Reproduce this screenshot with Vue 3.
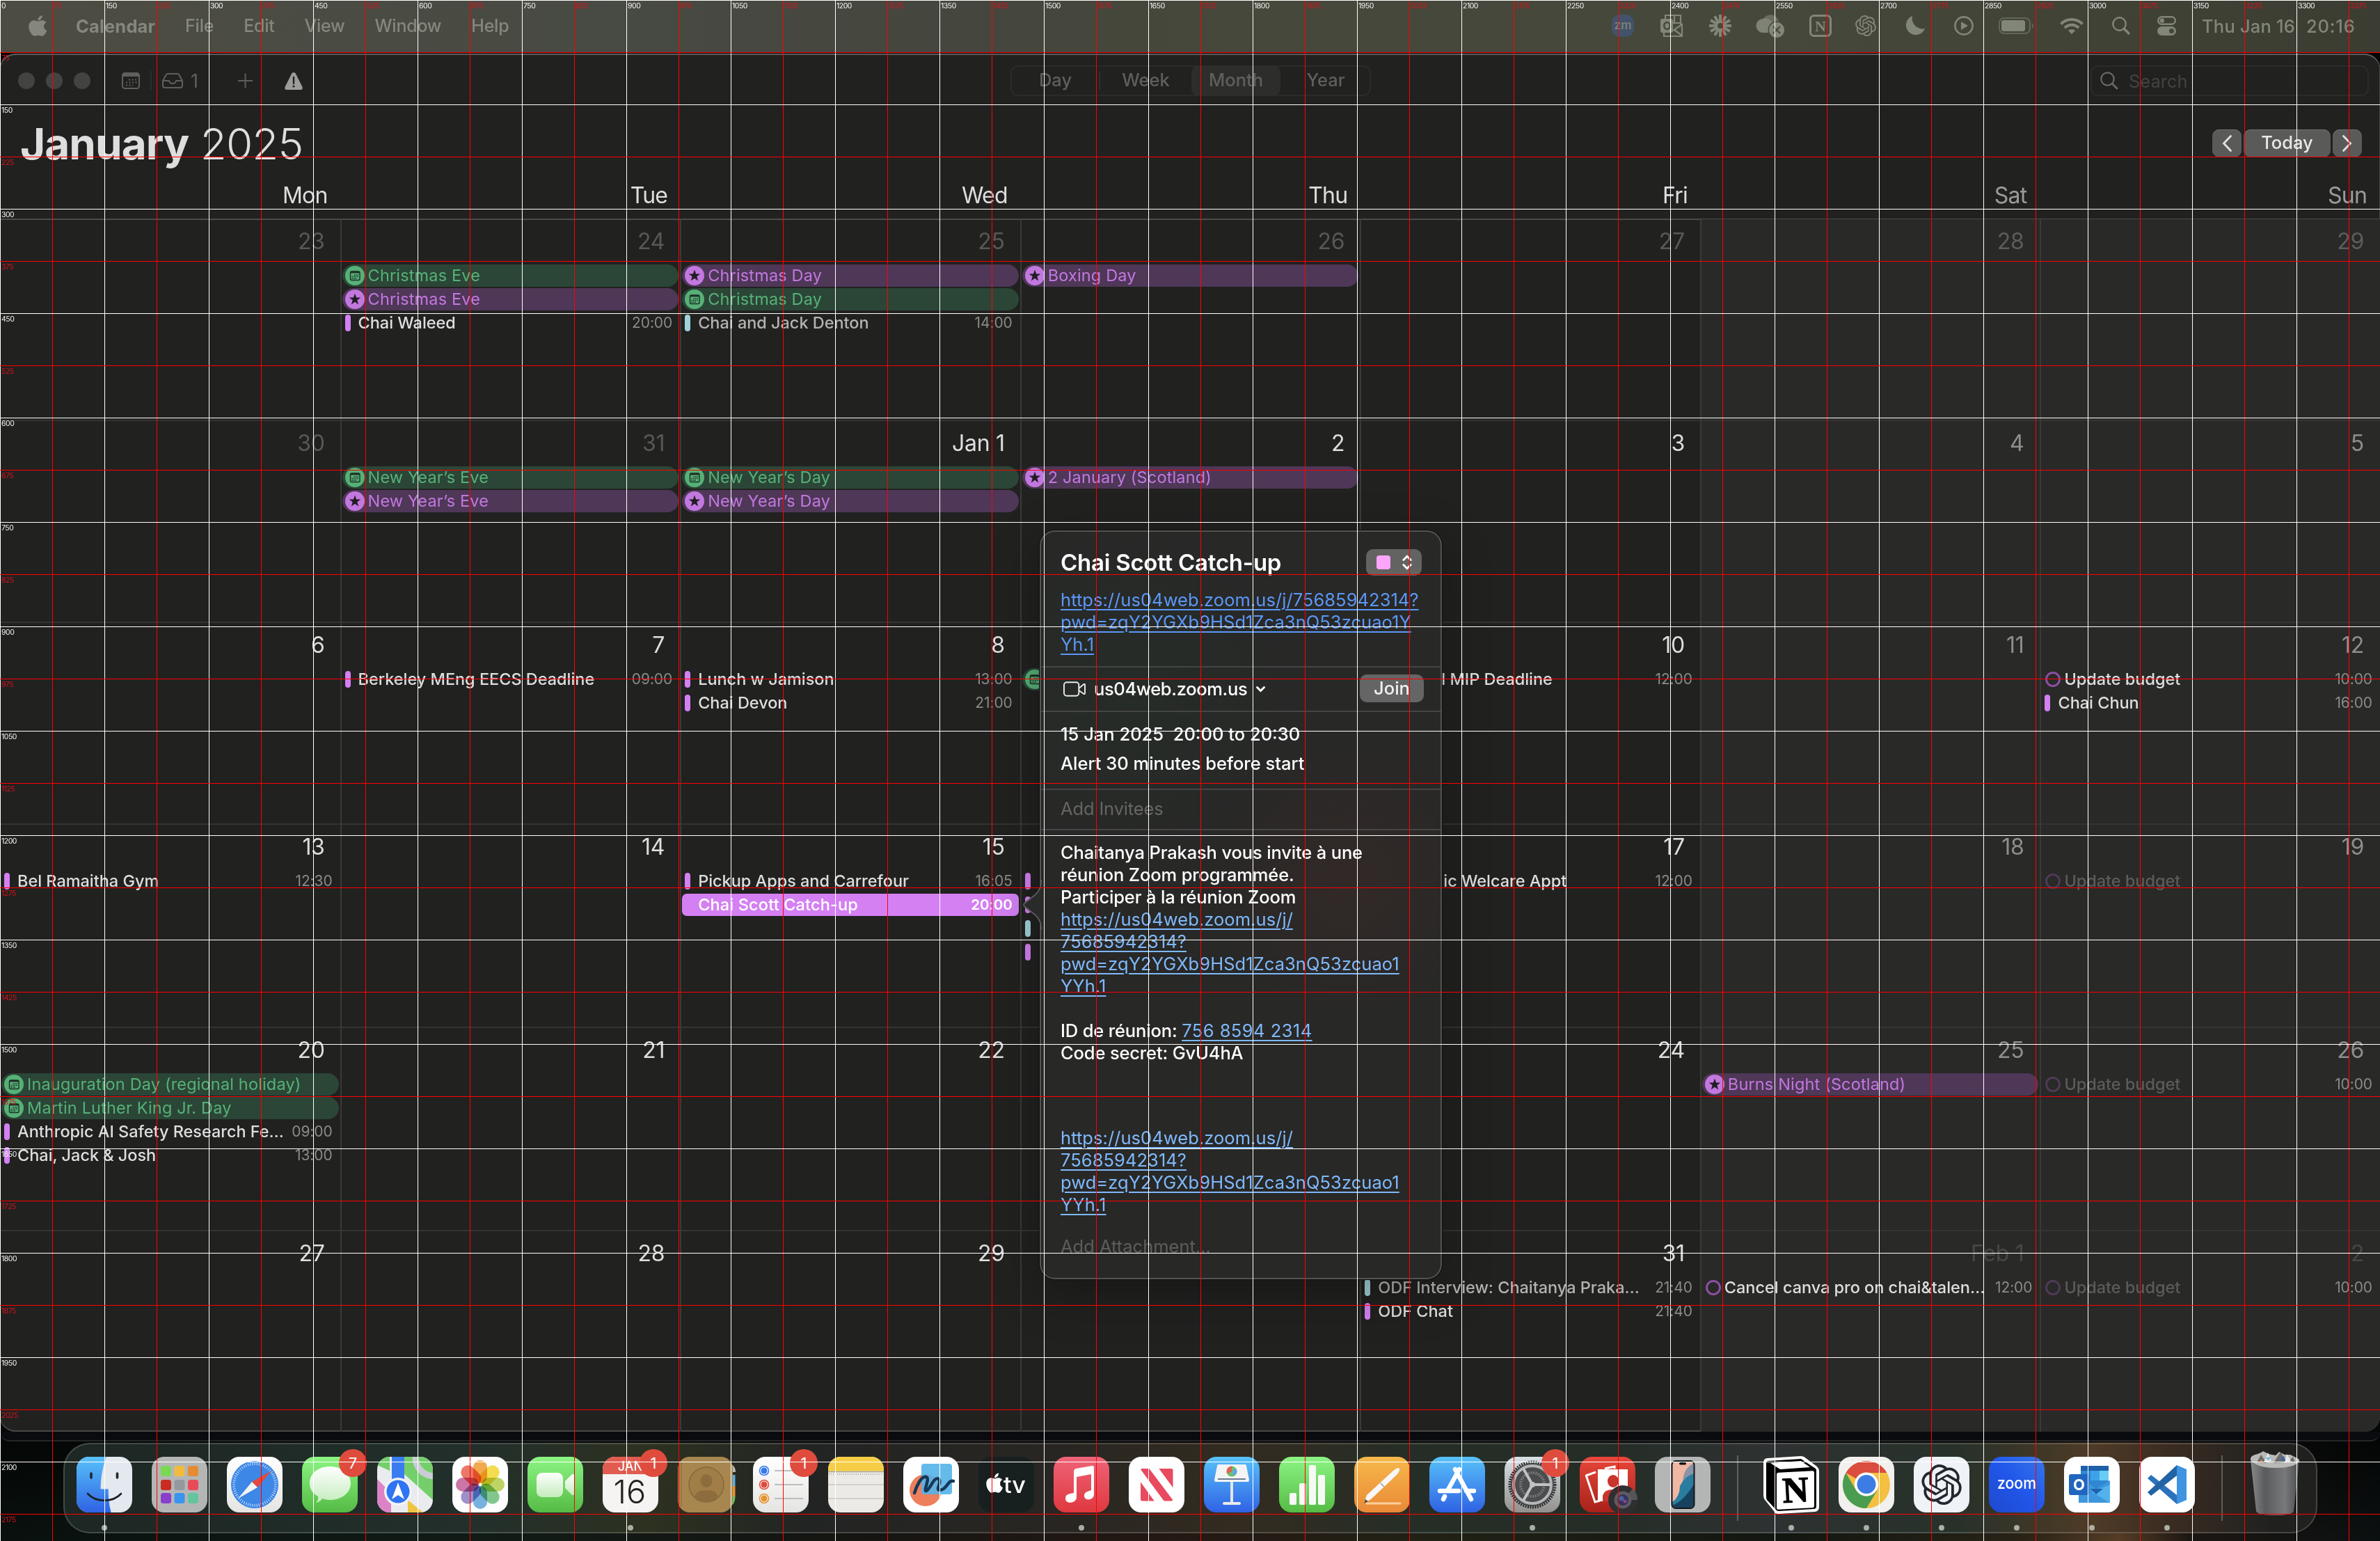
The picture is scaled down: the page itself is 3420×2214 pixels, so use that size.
<script setup>
const weekdays = ['Mon', 'Tue', 'Wed', 'Thu', 'Fri', 'Sat', 'Sun']

const holiday = (title) => ({ kind: 'pill', tone: 'green', title })
const special = (title) => ({ kind: 'pill', tone: 'purple', title })
const event = (title, time, extra = {}) => ({ kind: 'event', color: '#d480f3', title, time, ...extra })
const reminder = (title, time, extra = {}) => ({ kind: 'reminder', title, time, ...extra })

const weeks = [
  { height: 290, days: [
    { label: '23', out: true },
    { label: '24', out: true, items: [holiday('Christmas Eve'), special('Christmas Eve'), event('Chai Waleed', '20:00')] },
    { label: '25', out: true, items: [special('Christmas Day'), holiday('Christmas Day'), event('Chai and Jack Denton', '14:00', { color: '#a0d3d9', soft: true })] },
    { label: '26', out: true, items: [special('Boxing Day')] },
    { label: '27', out: true }, { label: '28', out: true }, { label: '29', out: true },
  ] },
  { height: 290, days: [
    { label: '30', out: true },
    { label: '31', out: true, items: [holiday('New Year’s Eve'), special('New Year’s Eve')] },
    { label: 'Jan 1', items: [holiday('New Year’s Day'), special('New Year’s Day')] },
    { label: '2', items: [special('2 January (Scotland)')] },
    { label: '3' }, { label: '4' }, { label: '5' },
  ] },
  { height: 290, days: [
    { label: '6' },
    { label: '7', items: [event('Berkeley MEng EECS Deadline', '09:00')] },
    { label: '8', items: [event('Lunch w Jamison', '13:00'), event('Chai Devon', '21:00')] },
    { label: '', items: [holiday('')] },
    { label: '10', items: [event('l MIP Deadline', '12:00', { indent: 91 })] },
    { label: '11' },
    { label: '12', items: [reminder('Update budget', '10:00'), event('Chai Chun', '16:00')] },
  ] },
  { height: 292, days: [
    { label: '13', items: [event('Bel Ramaitha Gym', '12:30')] },
    { label: '14' },
    { label: '15', items: [event('Pickup Apps and Carrefour', '16:05'), event('Chai Scott Catch-up', '20:00', { selected: true })] },
    { label: '', items: [event('', ''), event('', ''), event('', '', { color: '#a0d3d9' }), event('', '')] },
    { label: '17', items: [event('ic Welcare Appt', '12:00', { indent: 94 })] },
    { label: '18' },
    { label: '19', items: [reminder('Update budget', '', { faded: true })] },
  ] },
  { height: 292, days: [
    { label: '20', items: [holiday('Inauguration Day (regional holiday)'), holiday('Martin Luther King Jr. Day'), event('Anthropic AI Safety Research Fe…', '09:00'), event('Chai, Jack & Josh', '13:00')] },
    { label: '21' }, { label: '22' }, { label: '' }, { label: '24' },
    { label: '25', items: [special('Burns Night (Scotland)')] },
    { label: '26', items: [reminder('Update budget', '10:00', { faded: true })] },
  ] },
  { height: 289, days: [
    { label: '27' }, { label: '28' }, { label: '29' }, { label: '' },
    { label: '31', items: [event('ODF Interview: Chaitanya Praka…', '21:40', { color: '#a0d3d9', soft: true }), event('ODF Chat', '21:40')] },
    { label: 'Feb 1', out: true, items: [reminder('Cancel canva pro on chai&talen…', '12:00')] },
    { label: '2', out: true, items: [reminder('Update budget', '10:00', { faded: true })] },
  ] },
]

const columnMarks = Array.from({ length: 46 }, (_, i) => i * 75)
const rowMarks = Array.from({ length: 29 }, (_, i) => (i + 1) * 75)

const ticks = Array.from({ length: 60 }, (_, i) => i * 6)
const rays = Array.from({ length: 12 }, (_, i) => i * 30)
const petals = ['#f39a2e', '#f5d932', '#b5cf4b', '#6cc07a', '#5fa6dd', '#8f7cc4', '#c65f97', '#e9604f']
const openai = 'M22.2819 9.8211a5.9847 5.9847 0 0 0-.5157-4.9108 6.0462 6.0462 0 0 0-6.5098-2.9A6.0651 6.0651 0 0 0 4.9807 4.1818a5.9847 5.9847 0 0 0-3.9977 2.9 6.0462 6.0462 0 0 0 .7427 7.0966 5.98 5.98 0 0 0 .511 4.9107 6.051 6.051 0 0 0 6.5146 2.9001A5.9847 5.9847 0 0 0 13.2599 24a6.0557 6.0557 0 0 0 5.7718-4.2058 5.9894 5.9894 0 0 0 3.9977-2.9001 6.0557 6.0557 0 0 0-.7475-7.0729zm-9.022 12.6081a4.4755 4.4755 0 0 1-2.8764-1.0408l.1419-.0804 4.7783-2.7582a.7948.7948 0 0 0 .3927-.6813v-6.7369l2.02 1.1686a.071.071 0 0 1 .038.052v5.5826a4.504 4.504 0 0 1-4.4945 4.4944zm-9.6607-4.1254a4.4708 4.4708 0 0 1-.5346-3.0137l.142.0852 4.783 2.7582a.7712.7712 0 0 0 .7806 0l5.8428-3.3685v2.3324a.0804.0804 0 0 1-.0332.0615L9.74 19.9502a4.4992 4.4992 0 0 1-6.1408-1.6464zM2.3408 7.8956a4.485 4.485 0 0 1 2.3655-1.9728V11.6a.7664.7664 0 0 0 .3879.6765l5.8144 3.3543-2.0201 1.1685a.0757.0757 0 0 1-.071 0l-4.8303-2.7865A4.504 4.504 0 0 1 2.3408 7.872zm16.5963 3.8558L13.1038 8.364 15.1192 7.2a.0757.0757 0 0 1 .071 0l4.8303 2.7913a4.4944 4.4944 0 0 1-.6765 8.1042v-5.6772a.79.79 0 0 0-.407-.667zm2.0107-3.0231l-.142-.0852-4.7735-2.7818a.7759.7759 0 0 0-.7854 0L9.409 9.2297V6.8974a.0662.0662 0 0 1 .0284-.0615l4.8303-2.7866a4.4992 4.4992 0 0 1 6.6802 4.66zM8.3065 12.863l-2.02-1.1638a.0804.0804 0 0 1-.038-.0567V6.0742a4.4992 4.4992 0 0 1 7.3757-3.4537l-.142.0805L8.704 5.459a.7948.7948 0 0 0-.3927.6813zm1.0976-2.3654l2.602-1.4998 2.6069 1.4998v2.9994l-2.5974 1.4997-2.6067-1.4997Z'
const apple = 'M318.7 268.7c-.2-36.7 16.4-64.4 50-84.8-18.8-26.9-47.2-41.7-84.7-44.6-35.5-2.8-74.3 20.7-88.5 20.7-15 0-49.4-19.7-76.4-19.7C63.3 141.2 4 184.8 4 273.5q0 39.3 14.4 81.2c12.8 36.7 59 126.7 107.2 125.2 25.2-.6 43-17.9 75.8-17.9 31.8 0 48.3 17.9 76.4 17.9 48.6-.7 90.4-82.5 102.6-119.3-65.2-30.7-61.7-90-61.7-91.9zm-56.6-164.2c27.3-32.4 24.8-61.9 24-72.5-24.1 1.4-52 16.4-67.9 34.9-17.5 19.8-27.8 44.3-25.6 71.9 26.1 2 49.9-11.4 69.5-34.3z'
</script>

<template>
  <div class="desktop">
    <header class="menubar">
      <svg class="apple" viewBox="0 30 376 452" preserveAspectRatio="none"><path :d="apple" fill="currentColor" /></svg>
      <nav class="menus">
        <b>Calendar</b><span>File</span><span>Edit</span><span>View</span><span>Window</span><span>Help</span>
      </nav>
      <div class="status">
        <svg class="s-zm" viewBox="0 0 32 32"><rect width="32" height="32" rx="12" fill="#42536b" /><text x="16" y="21" text-anchor="middle" font-size="17" font-weight="600" fill="#7d8276">zm</text></svg>
        <svg class="s-outlook" viewBox="0 0 32 32" fill="none" stroke="currentColor" stroke-width="2.2"><path d="M7 6V1h22v15M18 12h11M20 1v12M5 25v6h26V14L18 23m2-1 11 8" /><rect x="0" y="6" width="18" height="20" rx="3" fill="currentColor" stroke="none" /><ellipse cx="9.5" cy="16" rx="4.2" ry="5" stroke="#45483a" stroke-width="2.6" /></svg>
        <svg class="s-burst" viewBox="-16 -16 32 32"><rect v-for="r in rays" :key="r" x="-2" y="-16" width="4" height="12" fill="currentColor" :transform="`rotate(${r})`" /></svg>
        <svg class="s-cloud" viewBox="0 0 40 36"><path d="M9 10a12 12 0 0 1 23 2l-12 5z" fill="#6a6d5f" /><path d="M10 28A10 10 0 0 1 9 8c6-2 12 2 15 6l-6 14z" fill="#7f8375" /><circle cx="29" cy="24" r="12.5" fill="#45483a" /><circle cx="29" cy="24" r="11" fill="currentColor" /><path d="m24 19 10 10m0-10L24 29" stroke="#45483a" stroke-width="2" /></svg>
        <svg class="s-notion" viewBox="0 0 32 32"><rect x="1.5" y="1.5" width="29" height="29" rx="5" fill="none" stroke="currentColor" stroke-width="3" /><text x="16" y="24" text-anchor="middle" font-size="22" font-weight="700" font-family="Liberation Serif, serif" fill="currentColor">N</text></svg>
        <svg class="s-gpt" viewBox="0 0 24 24"><path :d="openai" fill="currentColor" /></svg>
        <svg class="s-moon" viewBox="0 0 28 28"><path d="M10 0A14 14 0 1 0 28 18 15 15 0 0 1 10 0z" fill="currentColor" /></svg>
        <svg class="s-play" viewBox="0 0 28 28"><circle cx="14" cy="14" r="12.6" fill="none" stroke="currentColor" stroke-width="2.6" /><path d="M10 8v12l10-6z" fill="currentColor" /></svg>
        <svg class="s-battery" viewBox="0 0 52 24"><rect x="1" y="1" width="44" height="22" rx="7" fill="none" stroke="#62655a" stroke-width="2" /><rect x="4" y="4" width="34" height="16" rx="3.5" fill="currentColor" /><path d="M48 8v8q4-4 0-8" fill="#62655a" /></svg>
        <svg class="s-wifi" viewBox="0 0 34 24" fill="none" stroke="currentColor" stroke-width="4"><path d="M1.5 9.5a22 22 0 0 1 31 0M7 15a14 14 0 0 1 20 0" /><path d="M12 19q5-4 10 0l-5 5z" fill="currentColor" stroke="none" /></svg>
        <svg class="s-search" viewBox="0 0 26 26" fill="none" stroke="currentColor" stroke-width="2.4"><circle cx="10.5" cy="10.5" r="9.2" /><path d="m17 17 7 7" stroke-width="3.4" stroke-linecap="round" /></svg>
        <svg class="s-cc" viewBox="0 0 27 28"><rect x="1.2" y="1.2" width="24.6" height="10.6" rx="5.3" fill="none" stroke="currentColor" stroke-width="2.4" /><circle cx="6.8" cy="6.5" r="3.2" fill="currentColor" /><rect y="15" width="27" height="13" rx="6.5" fill="currentColor" /><circle cx="20.5" cy="21.5" r="3.6" fill="#45483a" /></svg>
        <span class="clock-day">Thu Jan 16</span><span class="clock-time">20:16</span>
      </div>
    </header>

    <main class="window">
      <div class="toolbar">
        <div class="lights"><i></i><i></i><i></i></div>
        <svg class="t-cal" viewBox="0 0 26 24" fill="none" stroke="currentColor" stroke-width="2"><rect x="1" y="1" width="24" height="22" rx="3.5" /><path d="M1 4h24" stroke-width="4" /><path d="M10 10.500h12M6 14.500h16M6 18.500h10" stroke-width="2" stroke-dasharray="2 2.500" /></svg>
        <i class="t-rule"></i>
        <svg class="t-tray" viewBox="0 0 30 22" fill="none" stroke="currentColor" stroke-width="2" stroke-linejoin="round"><path d="M1 11 6 2q.5-1 2-1h14q1.500 0 2 1l5 9v7q0 3-3 3H4q-3 0-3-3zh9q1 4 5 4t5-4h9" /></svg>
        <span class="t-count">1</span>
        <svg class="t-plus" viewBox="0 0 22 22" stroke="currentColor" stroke-width="2"><path d="M11 0v22M0 11h22" /></svg>
        <svg class="t-warn" viewBox="0 0 26 25"><path d="M13 0q2 0 3 2l9.500 19q1 4-2.500 4H3q-3.500 0-2.500-4L10 2q1-2 3-2z" fill="#9c9c9b" /><path d="M13 7v9" stroke="#212120" stroke-width="2.400" stroke-linecap="round" /><circle cx="13" cy="20" r="1.600" fill="#212120" /></svg>
        <div class="segments"><span class="ruled">Day</span><span>Week</span><span class="on">Month</span><span>Year</span></div>
        <div class="search">
          <svg viewBox="0 0 26 26" fill="none" stroke="currentColor" stroke-width="2.2"><circle cx="10.500" cy="10.500" r="9.200" /><path d="m17 17 7 7" stroke-width="2.800" stroke-linecap="round" /></svg>
          <span>Search</span>
        </div>
      </div>

      <div class="heading">
        <h1><b>January</b> <span>2025</span></h1>
        <div class="pager">
          <button class="step"><svg viewBox="0 0 14 24"><path d="M12.500 1.500 2.500 12l10 10.500" /></svg></button>
          <button class="today">Today</button>
          <button class="step"><svg viewBox="0 0 14 24"><path d="m1.500 1.500 10 10.500-10 10.500" /></svg></button>
        </div>
      </div>

      <div class="weekdays"><span v-for="d in weekdays" :key="d">{{ d }}</span></div>

      <section class="month">
        <div v-for="(w, wi) in weeks" :key="wi" class="week" :style="{ height: w.height + 'px' }">
          <div v-for="(d, di) in w.days" :key="di" class="day" :class="{ weekend: di > 4, out: d.out }">
            <div class="date">{{ d.label }}</div>
            <div v-for="(e, ei) in d.items" :key="ei" class="item" :class="[e.kind, e.tone, { selected: e.selected, soft: e.soft, faded: e.faded }]">
              <template v-if="e.kind === 'pill'">
                <svg v-if="e.tone === 'green'" class="badge-icon" viewBox="0 0 28 28"><circle cx="14" cy="14" r="14" fill="currentColor" /><rect x="7.500" y="8" width="13.500" height="12.500" rx="2" fill="none" stroke="#1f2d26" stroke-width="1.400" /><path d="M7.500 9.200h13.500" stroke="#1f2d26" stroke-width="2.400" /><path d="M12.500 13h7M9.500 15.500h10M9.500 18h7" stroke="#1f2d26" stroke-width="1.500" stroke-dasharray="1.500 1" /></svg>
                <svg v-else class="badge-icon" viewBox="0 0 28 28"><circle cx="14" cy="14" r="14" fill="currentColor" /><path d="m14 5.500 2.100 6h6.200l-5 3.800 1.900 6.200-5.200-3.700-5.200 3.700 1.900-6.200-5-3.800h6.200z" fill="#211d24" /></svg>
              </template>
              <i v-else-if="e.kind === 'event'" class="bar" :style="{ background: e.color }"></i>
              <i v-else class="ring"></i>
              <span class="title" :style="{ marginLeft: (e.indent || 0) + 'px' }">{{ e.title }}</span>
              <span v-if="e.time" class="time">{{ e.time }}</span>
            </div>
          </div>
        </div>
      </section>
    </main>

    <aside class="popover">
      <svg class="beak" viewBox="0 0 28 72"><path d="M27 0C27 10 25 16 18 22L4 33q-4 3 0 6l14 11c7 6 9 12 9 22z" fill="#2a2a2a" /><path d="M26 0C26 10 24 16 17 22L3 33q-4 3 0 6l14 11c7 6 9 12 9 22" fill="none" stroke="#5a5a59" stroke-width="2" /></svg>
      <div class="p-head">
        <div class="p-title"><h2>Chai Scott Catch-up</h2>
          <span class="swatch"><i></i><svg viewBox="0 0 16 24"><path d="m2 8 6-6 6 6M2 16l6 6 6-6" /></svg></span>
        </div>
        <p class="link"><u>https://us04web.zoom.us/j/75685942314?</u><br /><u>pwd=zqY2YGXb9HSd1Zca3nQ53zcuao1Y</u><br /><u>Yh.1</u></p>
      </div>
      <div class="p-call">
        <svg class="cam" viewBox="0 0 33 22"><rect x="1" y="1" width="22" height="20" rx="4" /><path d="m23 10 7-6q2-1 2 1v12q0 2-2 1l-7-5" /></svg>
        <span>us04web.zoom.us</span>
        <svg class="caret" viewBox="0 0 13 8"><path d="m1.500 1.500 5 5 5-5" /></svg>
        <button>Join</button>
      </div>
      <div class="p-when"><p>15 Jan 2025&nbsp; 20:00 to 20:30</p><p>Alert 30 minutes before start</p></div>
      <div class="p-invitees">Add Invitees</div>
      <div class="p-notes">
        <p>Chaitanya Prakash vous invite à une<br />réunion Zoom programmée.<br />Participer à la réunion Zoom</p>
        <p class="link2"><u>https://us04web.zoom.us/j/</u><br /><u>75685942314?</u><br /><u>pwd=zqY2YGXb9HSd1Zca3nQ53zcuao1</u><br /><u>YYh.1</u></p>
        <p class="ids">ID de réunion: <u class="link2 number">756 8594 2314</u><br />Code secret: GvU4hA</p>
        <p class="link2 again"><u>https://us04web.zoom.us/j/</u><br /><u>75685942314?</u><br /><u>pwd=zqY2YGXb9HSd1Zca3nQ53zcuao1</u><br /><u>YYh.1</u></p>
        <p class="attach">Add Attachment…</p>
      </div>
    </aside>

    <footer class="ground">
      <div class="back-window"></div>
      <div class="dock">
        <div class="app live">
          <svg viewBox="0 0 80 80">
            <defs>
              <clipPath id="tile"><rect width="80" height="80" rx="18" /></clipPath>
              <linearGradient id="gBlue" x2="0" y2="1"><stop stop-color="#58c2fa" /><stop offset="1" stop-color="#2f62e4" /></linearGradient>
              <linearGradient id="gGreen" x2="0" y2="1"><stop stop-color="#8cf583" /><stop offset="1" stop-color="#55bb45" /></linearGradient>
              <linearGradient id="gWhite" x2="0" y2="1"><stop stop-color="#ffffff" /><stop offset="1" stop-color="#e4e4e2" /></linearGradient>
              <linearGradient id="gShade" x2="0" y2="1"><stop stop-color="#ffffff" /><stop offset="1" stop-color="#c4ecbd" /></linearGradient>
            </defs>
            <g clip-path="url(#tile)"><rect width="80" height="80" fill="#e4e9f0" /><path d="M0 0h43c-5 15-8 30-8 46h11c0 12 1 23 4 34H0z" fill="url(#gBlue)" /></g>
            <path d="M43 0c-5 15-8 30-8 46h11c0 12 1 23 4 34" fill="none" stroke="#cfe0f3" stroke-width="1" /><path d="M16 53c12 13 36 13 48 0" fill="none" stroke="#1b2026" stroke-width="2.600" stroke-linecap="round" /><path d="M21 24v6M58.500 24v6" stroke="#23272c" stroke-width="3.600" stroke-linecap="round" />
          </svg>
        </div>
        <div class="app">
          <svg viewBox="0 0 80 80"><rect width="80" height="80" rx="18" fill="#b4b6b5" />
            <rect x="13" y="13" width="15" height="15" rx="3.500" fill="#79d955" /><rect x="32.500" y="13" width="15" height="15" rx="3.500" fill="#f1bc3e" /><rect x="52" y="13" width="15" height="15" rx="3.500" fill="#e48b33" />
            <rect x="13" y="33" width="15" height="15" rx="3.500" fill="#c92d22" /><rect x="32.500" y="33" width="15" height="15" rx="3.500" fill="#93999d" /><rect x="52" y="33" width="15" height="15" rx="3.500" fill="#e84a5a" />
            <rect x="13" y="52" width="15" height="15" rx="3.500" fill="#8a3fca" /><rect x="32.500" y="52" width="15" height="15" rx="3.500" fill="#3a94ee" /><rect x="52" y="52" width="15" height="15" rx="3.500" fill="#63c59d" />
          </svg>
        </div>
        <div class="app">
          <svg viewBox="0 0 80 80"><rect width="80" height="80" rx="18" fill="url(#gWhite)" /><circle cx="40" cy="40" r="34" fill="#3d87e6" />
            <g transform="translate(40 40)" stroke="#d9e9fb" stroke-width=".9"><path v-for="t in ticks" :key="t" d="M0-32v4" :transform="`rotate(${t})`" /></g>
            <path d="M64 20 36 36l8 8z" fill="#e5493b" /><path d="M16 60 36 36l8 8z" fill="#f4f4f4" />
          </svg>
        </div>
        <div class="app"><svg viewBox="0 0 80 80"><rect width="80" height="80" rx="18" fill="url(#gGreen)" /><path d="M40 14c17 0 30 10 30 24S57 62 40 62q-6 0-11-2-3 5-9 6 4-4 3-9c-8-4-12-11-12-19 0-14 12-24 29-24z" fill="url(#gShade)" /></svg><em>7</em></div>
        <div class="app">
          <svg viewBox="0 0 80 80"><g clip-path="url(#tile)"><rect width="80" height="80" fill="#e9ebee" /><path d="M0 0h18v20L0 12zM38 0h42v62L38 24z" fill="#74cf6b" /><path d="M0 32l20 20v28H0z" fill="#dc83c6" /><path d="M44 80V62l22 18z" fill="#f0c443" /><path d="M55 0c0 15 10 26 25 28" fill="none" stroke="#c9ccd3" stroke-width="9" /><path d="M21 0h18v40H21z" fill="#3a7df0" /></g><circle cx="30" cy="50" r="20" fill="#f1f2f6" /><circle cx="30" cy="50" r="16.500" fill="#2f74f2" /><path d="m30 37 9 24-9-6-9 6z" fill="#fff" /></svg>
        </div>
        <div class="app">
          <svg viewBox="0 0 80 80"><rect width="80" height="80" rx="18" fill="#fdfdfd" /><g transform="translate(40 40)"><rect v-for="(c, i) in petals" :key="c" class="petal" x="-10" y="-35" width="20" height="33" rx="10" :fill="c" :transform="`rotate(${i * 45})`" /></g></svg>
        </div>
        <div class="app"><svg viewBox="0 0 80 80"><rect width="80" height="80" rx="18" fill="url(#gGreen)" /><rect x="13" y="23" width="38" height="35" rx="8" fill="url(#gShade)" /><path d="M54 35l9-9q4-3 4 1v26q0 4-4 1l-9-9z" fill="url(#gShade)" /></svg></div>
        <div class="app live"><svg viewBox="0 0 80 80"><g clip-path="url(#tile)"><rect width="80" height="80" fill="#f5f4f2" /><rect width="80" height="25" fill="#e25b50" /></g><text x="40" y="20" text-anchor="middle" font-size="18" font-weight="500" fill="#fff">JAN</text><text x="39" y="67" text-anchor="middle" font-size="47" font-weight="300" fill="#222">16</text></svg><em>1</em></div>
        <div class="app">
          <svg viewBox="0 0 80 80"><path d="M74 10q9 2 9 12H70z" fill="#b9b9b5" /><rect x="68" y="26" width="14.500" height="16" fill="#59aee6" /><rect x="68" y="42" width="14.500" height="15" fill="#e99132" /><path d="M68 57h14.500q0 12-8 14z" fill="#65c763" /><rect x="0" width="79" height="80" rx="17" fill="#a8864f" /><path d="M5 8v64" stroke="#937340" stroke-width="1.500" /><circle cx="41" cy="40" r="25" fill="#a17e47" stroke="#86683a" stroke-width="1.500" /><ellipse cx="41" cy="34.500" rx="8.500" ry="9.500" fill="#8d6d3d" /><path d="M24 57q3-9 17-9t17 9q-7 8-17 8t-17-8z" fill="#8d6d3d" /></svg>
        </div>
        <div class="app">
          <svg viewBox="0 0 80 80"><rect width="80" height="80" rx="18" fill="url(#gWhite)" /><g stroke="#bdbdbd" stroke-width="1.800"><path d="M31 20h41M31 40h41M31 60h41" /></g><g fill="none" stroke-width="1.500"><circle cx="16" cy="20" r="6.500" stroke="#3478f0" /><circle cx="16" cy="40" r="6.500" stroke="#e04a3c" /><circle cx="16" cy="60" r="6.500" stroke="#e7932f" /></g><circle cx="16" cy="20" r="4.500" fill="#3478f0" /><circle cx="16" cy="40" r="4.500" fill="#e04a3c" /><circle cx="16" cy="60" r="4.500" fill="#e7932f" /></svg><em>1</em>
        </div>
        <div class="app"><svg viewBox="0 0 80 80"><g clip-path="url(#tile)"><rect width="80" height="80" fill="#ebeae7" /><rect width="80" height="20.500" fill="#f7cd45" /></g><path d="M0 21.500h80" stroke="#aaa08a" stroke-width="1.500" /><path d="M1 25h78" stroke="#b0aea8" stroke-width="2" stroke-dasharray="1 2" /><path d="M0 40h80M0 60h80" stroke="#c9c8c5" stroke-width="1.500" /></svg></div>
        <div class="app"><svg viewBox="0 0 80 80"><rect width="80" height="80" rx="18" fill="#fff" /><circle cx="32" cy="48" r="23" fill="#ee7f5c" /><rect x="26" y="10" width="44" height="44" rx="4" fill="#53b4e8" opacity=".9" /><path d="M16 52c3-10 10-25 17-23 6 2-5 21 0 20 6-2 11-22 18-17 5 4-5 15 1 16 6 0 9-5 13-10q3-4 7-3" fill="none" stroke="#153859" stroke-width="4.500" stroke-linecap="round" /></svg></div>
        <div class="app"><svg viewBox="0 0 80 80"><rect width="80" height="80" rx="18" fill="#17201f" /><path :d="apple" fill="#fff" transform="translate(11 21.500) scale(.063)" /><text x="36" y="52" font-size="33" font-weight="500" fill="#fff" textLength="32" lengthAdjust="spacingAndGlyphs">tv</text></svg></div>
        <div class="app live"><svg viewBox="0 0 80 80"><linearGradient id="gMusic" x2="0" y2="1"><stop stop-color="#ee6378" /><stop offset="1" stop-color="#e0383f" /></linearGradient><rect width="80" height="80" rx="18" fill="url(#gMusic)" /><path d="M29 21q0-3 3-4l23-4q3-.500 3 2v39c0 9-14 10-14 2 0-5 4-6 10-8V25l-21 4v29c0 9-16 11-16 2 0-6 5-7 12-8z" fill="#fff" /></svg></div>
        <div class="app"><svg viewBox="0 0 80 80"><rect width="80" height="80" rx="18" fill="#fff" /><rect x="17" y="17" width="46.500" height="46.500" rx="2.500" fill="#e84a5f" /><path d="M29 16.500h14l21 28.500v18zM51 64H37L16.500 35.500v-18z" fill="#fff" /></svg></div>
        <div class="app"><svg viewBox="0 0 80 80"><rect width="80" height="80" rx="18" fill="url(#gBlue)" /><path d="M19 13q0-2 2-2h38q2 0 2 2l4 20q0 3-2 3H17q-2 0-2-3z" fill="#f4f4f5" /><path d="M20 32h40" stroke="#6c7c93" stroke-width="2" /><circle cx="40" cy="21" r="7.500" fill="#6bc06a" /><path d="M40 21v-7.500a7.500 7.500 0 0 0-6.500 11z" fill="#e2634f" /><path d="M40 21l6.500-4A7.500 7.500 0 0 1 44 27z" fill="#63a4ea" /><path d="M38 36h4v30h-4z" fill="#e3e5ea" /><rect x="27" y="65" width="26" height="4" rx="2" fill="#e9ebef" /></svg></div>
        <div class="app"><svg viewBox="0 0 80 80"><rect width="80" height="80" rx="18" fill="url(#gGreen)" /><g fill="#f7f9f6"><rect x="15" y="52" width="10" height="17" rx="2" /><rect x="29" y="38" width="10" height="31" rx="2" /><rect x="43" y="12" width="10" height="57" rx="2" /><rect x="56" y="26" width="10" height="43" rx="2" /></g></svg></div>
        <div class="app"><svg viewBox="0 0 80 80"><linearGradient id="gOrange" x2="0" y2="1"><stop stop-color="#f6b94a" /><stop offset="1" stop-color="#ea8937" /></linearGradient><rect width="80" height="80" rx="18" fill="url(#gOrange)" /><path d="M18 67h48" stroke="#f9cf9d" stroke-width="3" stroke-linecap="round" /><path d="M14 67l4-12 37-34q8-7 10-4 1 3-4 9L24 61z" fill="#f7f7f7" /><path d="M38 38l5 5" stroke="#9a9a9a" stroke-width="1.500" /><path d="m14 67 2-6 4 3z" fill="#5d4a34" /></svg></div>
        <div class="app"><svg viewBox="0 0 80 80"><rect width="80" height="80" rx="18" fill="url(#gBlue)" /><g stroke="#fff" stroke-width="6.500" stroke-linecap="round"><path d="M43 18 27 47M37 18l23 43M15 49h27M53 49h11M22 57l-2 4" /></g></svg></div>
        <div class="app live"><svg viewBox="0 0 80 80"><linearGradient id="gGear" x2="0" y2="1"><stop stop-color="#d8e1e6" /><stop offset="1" stop-color="#92908d" /></linearGradient><rect width="80" height="80" rx="18" fill="url(#gGear)" /><circle cx="40" cy="40" r="31" fill="#4b4c4d" /><circle cx="40" cy="40" r="32.500" fill="none" stroke="#2b2c2d" stroke-width="4" stroke-dasharray="2 1.500" /><circle cx="40" cy="40" r="27" fill="none" stroke="#b5b8b9" stroke-width="4" /><circle cx="40" cy="40" r="17" fill="none" stroke="#77797a" stroke-width="4" stroke-dasharray="2 1.500" /><path d="M40 40h26M40 40 27 17M40 40 27 63" stroke="#c0c3c4" stroke-width="4" /><circle cx="40" cy="40" r="4" fill="#c0c3c4" /></svg><em>1</em></div>
        <div class="app"><svg viewBox="0 0 80 80"><linearGradient id="gRed" x2="0" y2="1"><stop stop-color="#e8473a" /><stop offset="1" stop-color="#a8211a" /></linearGradient><rect width="80" height="80" rx="18" fill="url(#gRed)" /><path d="M9 27l14-5M9 26l13 39 7-2M36 17l14-3v3" stroke="#fff" stroke-width="3" fill="none" /><rect x="26" y="18" width="43" height="46" fill="#fff" /><ellipse cx="48" cy="35" rx="8" ry="9" fill="#c9342b" /><path d="M33 64V56q2-9 15-9t15 9v8z" fill="#c9342b" /><circle cx="62" cy="62" r="21" fill="#2f2f31" /><path d="M62 62 76 46A21 21 0 0 1 83 62z" fill="#555558" /><circle cx="62" cy="62" r="12.500" fill="#5c5c60" /><circle cx="62" cy="62" r="8" fill="#35315f" /><circle cx="60" cy="60" r="3.500" fill="#42669c" /><circle cx="65" cy="64" r="2.500" fill="#8a4486" /></svg></div>
        <div class="app"><svg viewBox="0 0 80 80"><rect width="80" height="80" rx="18" fill="#b4b6b5" /><clipPath id="phone"><rect x="25" y="7" width="31" height="66" rx="5" /></clipPath><g clip-path="url(#phone)"><rect x="24" y="5" width="34" height="70" fill="#f0b7a3" /><path d="M60 7C44 14 40 24 40 40l20-14z" fill="#8a94a8" /><path d="M24 66q12-8 12-24Q44 26 58 24v51H24z" fill="#2a7d9e" /><path d="M24 70q18-6 34-34v40H24z" fill="#17425f" /></g><rect x="24.500" y="6" width="32" height="68" rx="5.500" fill="none" stroke="#15171c" stroke-width="2" /><rect x="35" y="8" width="10" height="3.500" rx="1.700" fill="#111" /></svg></div>
        <i class="dock-rule"></i>
        <div class="app live"><svg viewBox="0 0 80 80"><path d="M6 2 54-1q4 0 7 3l16 12q3 3 3 6v52q0 6-6 7l-53 3q-4 0-6-4L3 63q-3-3-3-7V9q0-7 6-7z" fill="#fff" /><path d="M4 9q0-3 3-3l47-3 21 14q1 1 1 3v51q0 4-4 4l-50 3q-3 0-4-2L5 62q-1-2-1-5z" fill="#000" /><path d="M10 9l44-3 13 9-43 3z" fill="#fff" /><rect x="19" y="22" width="54" height="53" rx="3" fill="#fff" transform="skewY(-3) translate(0 2)" /><text x="46" y="65" text-anchor="middle" font-size="52" font-weight="700" font-family="Liberation Serif, serif" fill="#000" stroke="#000" stroke-width="1.200" transform="rotate(-3 46 48)">N</text></svg></div>
        <div class="app live"><svg viewBox="0 0 80 80"><rect width="80" height="80" rx="18" fill="#f1f0ee" /><circle cx="40" cy="40" r="34" fill="#f3c042" /><path d="M40 40 10.500 23A34 34 0 0 1 69.400 23H40z" fill="#da4d3f" /><path d="M10.500 23A34 34 0 0 0 40 74l15-25-15-9-15 8z" fill="#4a9c50" /><circle cx="40" cy="39.500" r="17" fill="#fff" /><circle cx="40" cy="39.500" r="13.500" fill="#3c7ce4" /></svg></div>
        <div class="app live"><svg viewBox="0 0 80 80"><rect width="80" height="80" rx="18" fill="#eff2f7" /><path :d="openai" fill="#24272f" transform="translate(11 11) scale(2.420)" /></svg></div>
        <div class="app live"><svg viewBox="0 0 80 80"><linearGradient id="gZoom" x1="1" x2="0" y2="1"><stop stop-color="#3577ea" /><stop offset=".5" stop-color="#2156ea" /><stop offset="1" stop-color="#1f49cc" /></linearGradient><rect width="80" height="80" rx="18" fill="url(#gZoom)" /><text x="40" y="46" text-anchor="middle" font-size="23" font-weight="500" fill="#fff" textLength="56" lengthAdjust="spacingAndGlyphs">zoom</text></svg></div>
        <div class="app live"><svg viewBox="0 0 80 80"><rect width="80" height="80" rx="18" fill="#fff" /><rect x="24" y="13" width="40" height="40" fill="#2f86d2" /><rect x="24" y="13" width="40" height="7" fill="#1d5fa8" /><rect x="51" y="20" width="13" height="14" fill="#67cdf7" /><rect x="38" y="20" width="13" height="14" fill="#3ea2e6" /><path d="M21 36h13l12 10 20-12v32H21z" fill="#3d97dc" /><path d="m40 51 26 15V40z" fill="#53b2ec" /><path d="M38 46h18L46 54z" fill="#1f64ae" /><rect x="7" y="25" width="29" height="30" rx="3" fill="#2066bf" /><text x="21.500" y="48" text-anchor="middle" font-size="22" font-weight="700" fill="#fff">O</text></svg></div>
        <div class="app live"><svg viewBox="0 0 80 80"><rect width="80" height="80" rx="18" fill="#fff" /><path d="M12 31l5-5 37 29v13z" fill="#2a72bd" /><path d="M12 51 54 12v15L17 56z" fill="#2263a5" /><path d="M54 12 68 18v44l-14 6z" fill="#3f93e0" /></svg></div>
        <i class="dock-rule last"></i>
        <div class="app bin"><svg viewBox="0 0 80 80"><linearGradient id="gBin" x2="1"><stop stop-color="#88898a" /><stop offset=".3" stop-color="#5a5b5c" /><stop offset=".7" stop-color="#78797a" /><stop offset="1" stop-color="#4c4d4e" /></linearGradient><path d="M5 4h70l-8 74q-2 6-27 6t-27-6z" fill="url(#gBin)" /><path d="M5 4q-1-6 10-8l5-2 3-2 8 4 10 2 5-5 8 4 8 0 8 4q6 2 5 6-8 9-35 9T5 4z" fill="#b9b9b7" /><path d="m14 8 6-11 8 12zM38 9l10-16 9 15zM60 6l6-6 3 8z" fill="#6d6c6c" /><path d="m24 8 6-14 5 12zM54 9l3-13 6 10z" fill="#e8e8e6" /><path d="m26 2 8-2-3 5z" fill="#62b9d8" /><path d="m48 4 5-5 2 7z" fill="#3a62b5" /><path d="m18 6 4-2v5z" fill="#d88032" /></svg></div>
      </div>
    </footer>

    <div class="rulers">
      <span v-for="m in columnMarks" :key="'c' + m" :class="{ odd: m % 150 }" :style="{ left: m + 2 + 'px', top: '2px' }">{{ m }}</span>
      <span v-for="m in rowMarks" :key="'r' + m" :class="{ odd: m % 150 }" :style="{ left: '2px', top: m + 2 + 'px' }">{{ m }}</span>
    </div>
  </div>
</template>

<style>
body { background: #0b0f0d; }
</style>

<style scoped>
.desktop { position: relative; width: 3420px; height: 2214px; overflow: hidden; display: flex; flex-direction: column; background: #050606; font-family: Inter, "Liberation Sans", sans-serif; color: #dedede; }
p, h1, h2 { margin: 0; font-weight: inherit; }
button { border: 0; padding: 0; font: inherit; color: inherit; }
svg { display: block; overflow: visible; flex: none; }

.menubar { height: 76px; flex: none; box-sizing: border-box; padding: 0 33px 0 41px; display: flex; align-items: center; background: linear-gradient(90deg, #4d4c42, #484b43 25%, #45463e 40%, #45483a 52%, #45483a 75%, #3b3d32 100%); color: #85877c; font-size: 25.500px; }
.menubar > * { margin-top: -2px; }
.apple { width: 26px; height: 30px; }
.menus { margin-left: 42px; display: flex; gap: 43px; font-weight: 500; font-size: 25px; letter-spacing: -.25px; }
.menus b { font-weight: 700; font-size: 25.500px; letter-spacing: .15px; }
.status { margin-left: auto; display: flex; align-items: center; font-weight: 500; color: #828678; }
.s-zm, .s-outlook, .s-burst, .s-notion { width: 32px; height: 32px; }
.s-outlook, .s-burst { margin-left: 38px; }
.s-cloud { width: 40px; height: 36px; margin-left: 36px; }
.s-notion { margin-left: 36px; }
.s-gpt { width: 30px; height: 30px; margin-left: 34px; }
.s-moon { width: 28px; height: 28px; margin-left: 42px; }
.s-play { width: 28px; height: 28px; margin-left: 42px; }
.s-battery { width: 52px; height: 24px; margin-left: 36px; }
.s-wifi { width: 34px; height: 24px; margin-left: 36px; }
.s-search { width: 26px; height: 26px; margin-left: 41px; }
.s-cc { width: 27px; height: 28px; margin-left: 39px; }
.clock-day { margin-left: 37px; width: 150px; white-space: nowrap; letter-spacing: .2px; }
.clock-time { width: 73px; white-space: nowrap; letter-spacing: .8px; }

.window { width: 3420px; height: 1980px; margin-top: 1px; flex: none; box-sizing: border-box; background: #212120; border-radius: 22px; box-shadow: inset 0 2px 0 #5d5d5c, inset 0 -2px 0 #484847, inset 1px 0 0 #484847, inset -1px 0 0 #484847; overflow: hidden; }
.toolbar { height: 78px; display: flex; align-items: center; padding: 0 16px 0 26px; color: #5f5f5e; font-size: 25.500px; font-weight: 500; }
.lights { display: flex; gap: 16px; }
.lights i { width: 24px; height: 24px; border-radius: 50%; background: #434342; }
.t-cal { width: 26px; height: 24px; margin-left: 45px; }
.t-rule { width: 2px; height: 28px; background: #2d2d2c; margin-left: 15px; }
.t-tray { width: 30px; height: 22px; margin-left: 15px; }
.t-count { margin-left: 11px; width: 14px; font-weight: 400; font-size: 27px; }
.t-plus { width: 21px; height: 22px; margin-left: 54px; }
.t-warn { width: 26px; height: 25px; margin-left: 46px; }
.segments { margin-left: 1017px; width: 518px; height: 44px; box-sizing: border-box; border-radius: 11px; box-shadow: inset 0 0 0 2px #2b2b2a; display: grid; grid-template-columns: 129px 131px 128px 130px; text-align: center; line-height: 42px; }
.segments .on { background: #2d2d2c; border-radius: 11px; }
.segments .ruled { background: linear-gradient(#2d2d2c, #2d2d2c) right center / 2px 28px no-repeat; }
.search { margin-left: auto; width: 400px; height: 44px; box-sizing: border-box; border-radius: 11px; box-shadow: inset 0 0 0 2px #2b2b2a; display: flex; align-items: center; padding-left: 14px; gap: 15px; color: #434342; font-weight: 400; }
.search svg { width: 26px; height: 26px; color: #6a6a69; }

.heading { height: 105px; display: flex; justify-content: space-between; padding: 0 26px 0 29px; }
h1 { font-size: 62px; line-height: 104px; letter-spacing: -.95px; white-space: pre; }
h1 b { font-weight: 700; }
h1 span { font-weight: 300; }
.pager { display: flex; gap: 3px; padding-top: 31px; }
.pager button { height: 40px; border-radius: 10px; background: #5a5a59; box-shadow: inset 0 1px 0 #747473; display: flex; align-items: center; justify-content: center; }
.pager .step { width: 42px; }
.step svg { width: 14px; height: 24px; fill: none; stroke: #e2e2e2; stroke-width: 2.800; stroke-linecap: round; }
.pager .today { width: 125px; font-size: 25.500px; font-weight: 500; color: #e8e8e8; padding-bottom: 3px; }

.weekdays { height: 56px; display: grid; grid-template-columns: repeat(7, 1fr); text-align: right; font-size: 32px; line-height: 42px; border-bottom: 2px solid #4b4b4a; box-sizing: border-box; }
.weekdays span { padding-right: 18px; letter-spacing: -.8px; }
.weekdays span:nth-child(n + 6) { color: #9b9b9a; padding-right: 19px; }

.month { margin-top: -1px; position: relative; }
.week { display: grid; grid-template-columns: repeat(7, 1fr); }
.day { box-sizing: border-box; min-width: 0; box-shadow: inset 2px 0 0 #3a3a39, inset 0 -2px 0 #343433; padding: 0 2px 0 3px; }
.day:first-child { box-shadow: inset 0 -2px 0 #343433; padding-left: 2px; }
.week:last-child .day { box-shadow: inset 2px 0 0 #3a3a39; }
.week:last-child .day:first-child { box-shadow: none; }
.day.weekend { background: #292928; }
.date { height: 65px; line-height: 64px; padding-right: 20px; text-align: right; font-size: 32px; letter-spacing: -.3px; }
.weekend .date { color: #8e8e8d; padding-right: 21px; }
.out .date { color: #585857; }
.weekend.out .date { color: #5d5d5c; }
.week:last-child .out .date { color: #474746; }
.item { height: 32px; margin-bottom: 2px; display: flex; align-items: center; font-size: 23.500px; font-weight: 500; white-space: nowrap; line-height: 30px; }
.title { flex: none; letter-spacing: -.03px; padding-bottom: 1px; }
.pill { border-radius: 16px; font-weight: 400; }
.pill .title { letter-spacing: .16px; }
.green { background: #2b4637; color: #56b177; }
.purple { background: #4f3758; color: #c278df; }
.badge-icon { width: 28px; height: 28px; margin: 0 5px 0 4px; }
.bar { width: 8px; height: 24px; border-radius: 4px; margin: 0 11px 0 4px; flex: none; }
.ring { width: 22px; height: 22px; box-sizing: border-box; border: 3px solid #8c4fa3; border-radius: 50%; margin: 0 5px 0 5px; flex: none; }
.time { margin-left: auto; padding-right: 9px; font-size: 21px; letter-spacing: -.1px; font-weight: 400; color: #8a8a89; }
.soft { color: #b3b3b2; }
.faded { color: #5b5b5a; }
.faded .ring { border-color: #4f3a57; }
.selected { background: #d480f3; border-radius: 7px; color: #fff; }
.selected .title { letter-spacing: .15px; }
.selected .time { color: #fff; font-weight: 600; font-size: 20.500px; }

.popover { position: absolute; left: 1494px; top: 762px; width: 578px; height: 1076px; box-sizing: border-box; border: 2px solid #555554; border-radius: 22px; background: radial-gradient(circle 200px at 440px 500px, #322927, transparent), radial-gradient(circle 260px at 130px 230px, #262c28, transparent), #282827; box-shadow: 0 0 0 1px #0c0c0c, 0 20px 70px rgba(0, 0, 0, .3); color: #fff; font-size: 25.500px; font-weight: 500; letter-spacing: -.15px; line-height: 32px; white-space: nowrap; }
.beak { position: absolute; left: -26px; top: 500px; width: 28px; height: 72px; }
.p-head, .p-call, .p-when, .p-invitees { border-bottom: 2px solid #444544; box-sizing: border-box; }
.p-head { height: 195px; padding: 24px 27px 0 28px; }
.p-title { display: flex; justify-content: space-between; align-items: center; height: 40px; margin-bottom: 18px; }
h2 { font-size: 33px; font-weight: 600; letter-spacing: -.25px; }
.swatch { width: 80px; height: 38px; border-radius: 10px; background: #636362; display: flex; align-items: center; justify-content: center; gap: 17px; }
.swatch i { width: 20px; height: 20px; border-radius: 4px; background: #fda5fb; }
.swatch svg { width: 14px; height: 22px; fill: none; stroke: #fff; stroke-width: 3.200; stroke-linecap: round; }
u { text-decoration-thickness: 2px; text-underline-offset: 4px; }
.link { color: #5c97f7; font-weight: 400; letter-spacing: .05px; }
.p-call { height: 64px; display: flex; align-items: center; padding: 0 24px 0 32px; }
.p-call span { letter-spacing: -.35px; }
.cam { width: 32px; height: 22px; fill: none; stroke: #e8e8e8; stroke-width: 2; margin-right: 12px; }
.caret { width: 13px; height: 8px; fill: none; stroke: #fff; stroke-width: 3; stroke-linecap: round; margin-left: 13px; }
.p-call button { margin: -3px 0 0 auto; width: 92px; height: 40px; border-radius: 10px; background: #656565; font-weight: 500; color: #f0f0f0; line-height: 37px; }
.p-when { height: 112px; padding: 11px 0 0 28px; line-height: 42px; letter-spacing: 0; }
.p-invitees { height: 58px; line-height: 53px; padding-left: 28px; color: #656564; font-weight: 400; }
.p-notes { padding: 16px 0 0 28px; }
.link2 { color: #7fb9fb; font-weight: 400; letter-spacing: .06px; }
.number { letter-spacing: .45px; }
.ids { margin-top: 32px; }
.again { margin-top: 90px; }
.attach { margin-top: 28px; color: #5d5d5c; font-weight: 400; letter-spacing: 0; }

.ground { flex: 1; display: flex; flex-direction: column; align-items: center; background: linear-gradient(180deg, rgba(0, 0, 0, .75), rgba(0, 0, 0, .2)), linear-gradient(90deg, #0b1512, #15231c 20%, #1a1a16 35%, #2e1f18 50%, #2a2a1b 60%, #171d15 75%, #332c1c 85%, #6b4d30 89%, #241d18 92%, #0d1414); }
.back-window { width: 3420px; height: 14px; box-sizing: border-box; background: #0a0b0f; border-bottom: 2px solid #25262a; border-radius: 0 0 22px 22px; margin-bottom: 2px; }
.dock { width: 3239px; height: 130px; box-sizing: border-box; margin-left: 1px; border-radius: 38px; box-shadow: inset 0 0 0 2px rgba(255, 255, 255, .17); background: linear-gradient(90deg, #1d2723, #222f2b 18%, #2d3120 26%, #222423 33%, #292622 45%, #332b20 52%, #252e26 60%, #252d27 68%, #2e3232 76%, #27312a 84%, #4f3b26 90%, #3d2d22 93%, #20211f 98%); padding: 20px 0 20px 19px; display: flex; gap: 28px; }
.app { position: relative; width: 80px; height: 80px; flex: none; }
.app svg { width: 80px; height: 80px; }
.petal { opacity: .85; mix-blend-mode: multiply; }
.live::after { content: ""; position: absolute; left: 36px; top: 98px; width: 8px; height: 8px; border-radius: 50%; background: rgba(200, 208, 195, .8); }
.app em { position: absolute; right: -13px; top: -11px; width: 40px; height: 40px; border-radius: 50%; background: #df4c3d; color: #fff; font-style: normal; font-size: 22px; line-height: 40px; text-align: center; }
.dock-rule { width: 2px; height: 94px; margin: -2px 8px 0 10px; background: rgba(255, 255, 255, .25); flex: none; }
.dock-rule.last { margin-right: 7px; }

.rulers { position: absolute; inset: 0; pointer-events: none; }
.rulers::before, .rulers::after { content: ""; position: absolute; inset: 0; background-size: 150px 150px; }
.rulers::before { background-image: linear-gradient(90deg, #fff 1px, transparent 1px), linear-gradient(90deg, #f00 1px, transparent 1px); background-position: 0 0, 75px 0; }
.rulers::after { background-image: linear-gradient(180deg, #f00 1px, transparent 1px), linear-gradient(180deg, #fff 1px, transparent 1px); background-position: 0 75px, 0 0; }
.rulers span { position: absolute; z-index: 1; font-size: 10.500px; line-height: 13px; letter-spacing: -.5px; color: #f4f4f4; }
.rulers .odd { color: #d8121c; }
</style>
